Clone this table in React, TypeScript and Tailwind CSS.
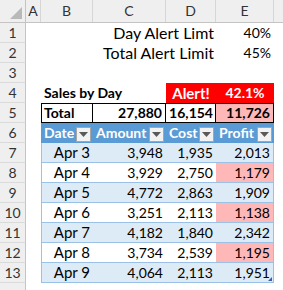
import type { ReactNode } from "react";

const rows = [
  { date: "Apr 3", amount: "3,948", cost: "1,935", profit: "2,013", alert: false },
  { date: "Apr 4", amount: "3,929", cost: "2,750", profit: "1,179", alert: true },
  { date: "Apr 5", amount: "4,772", cost: "2,863", profit: "1,909", alert: false },
  { date: "Apr 6", amount: "3,251", cost: "2,113", profit: "1,138", alert: true },
  { date: "Apr 7", amount: "4,182", cost: "1,840", profit: "2,342", alert: false },
  { date: "Apr 8", amount: "3,734", cost: "2,539", profit: "1,195", alert: true },
  { date: "Apr 9", amount: "4,064", cost: "2,113", profit: "1,951", alert: false },
];

function RowHead({ n }: { n?: number }) {
  return (
    <div className="flex h-[20px] w-[26px] shrink-0 items-center justify-center border-r border-b border-r-[#c4c4c4] border-b-[#dadada] bg-[#efefef] text-[14px] text-[#333]">
      {n}
    </div>
  );
}

function FilterButton() {
  return (
    <div className="absolute right-[2px] bottom-[1px] flex h-[15px] w-[15px] items-center justify-center border border-[#a6a6a6] bg-[#f2f2f2]">
      <svg width="9" height="5" viewBox="0 0 9 5">
        <polygon points="0,0 9,0 4.5,5" fill="#595959" />
      </svg>
    </div>
  );
}

function Cell({ w, className = "", children }: { w: string; className?: string; children?: ReactNode }) {
  return (
    <div className={`flex h-[20px] shrink-0 items-center whitespace-nowrap ${w} ${className}`}>{children}</div>
  );
}

function Line({ n, children }: { n?: number; children?: ReactNode }) {
  return (
    <div className="flex h-[20px]">
      <RowHead n={n} />
      <div className="w-[15px] shrink-0" />
      {children}
    </div>
  );
}

export default function App() {
  return (
    <div className="h-[290px] w-[283px] overflow-hidden bg-white text-[15px] leading-none text-black" style={{ fontFamily: "Lato, 'Noto Sans', sans-serif" }}>
      {/* column headers */}
      <div className="flex h-[23px] border-b border-[#c4c4c4] bg-[#efefef] text-[14px] text-[#333]">
        <div className="relative w-[26px] shrink-0 border-r border-[#c4c4c4]">
          <svg className="absolute right-[3px] bottom-[3px]" width="12" height="12" viewBox="0 0 12 12">
            <polygon points="12,0 12,12 0,12" fill="#b9b9b9" />
          </svg>
        </div>
        <div className="flex w-[15px] shrink-0 items-center justify-center border-r border-[#d6d6d6]">A</div>
        <div className="flex w-[52px] shrink-0 items-center justify-center border-r border-[#d6d6d6]">B</div>
        <div className="flex w-[73px] shrink-0 items-center justify-center border-r border-[#d6d6d6]">C</div>
        <div className="flex w-[50px] shrink-0 items-center justify-center border-r border-[#d6d6d6]">D</div>
        <div className="flex w-[58px] shrink-0 items-center justify-center border-r border-[#d6d6d6]">E</div>
        <div className="flex-1" />
      </div>

      <Line n={1}>
        <Cell w="w-[52px]" />
        <Cell w="w-[73px]" />
        <Cell w="w-[50px]" className="justify-end pr-[2px] text-[16px]">Day Alert Limt</Cell>
        <Cell w="w-[58px]" className="justify-end pr-[3px] text-[14px]">40%</Cell>
      </Line>
      <Line n={2}>
        <Cell w="w-[52px]" />
        <Cell w="w-[73px]" />
        <Cell w="w-[50px]" className="justify-end pr-[2px] text-[16px]">Total Alert Limit</Cell>
        <Cell w="w-[58px]" className="justify-end pr-[3px] text-[14px]">45%</Cell>
      </Line>
      <Line n={3} />
      <Line n={4}>
        <Cell w="w-[52px]" className="pl-[3px] text-[14px] font-bold">Sales by Day</Cell>
        <Cell w="w-[73px]" />
        <Cell w="w-[50px]" className="justify-center bg-[#ff0000] font-bold text-white">Alert!</Cell>
        <Cell w="w-[58px]" className="justify-center bg-[#ff0000] text-[14px] font-bold text-white">42.1%</Cell>
      </Line>
      <Line n={5}>
        <Cell w="w-[52px]" className="border border-black pl-[2px] text-[14px] font-bold">Total</Cell>
        <Cell w="w-[73px]" className="justify-end border-y border-r border-black pr-[3px] text-[14px] font-bold">27,880</Cell>
        <Cell w="w-[50px]" className="justify-end border-y border-r border-black pr-[2px] text-[14px] font-bold">16,154</Cell>
        <Cell w="w-[58px]" className="justify-end border-y border-r border-black bg-[#ffb8b8] pr-[3px] text-[14px] font-bold">11,726</Cell>
      </Line>
      <Line n={6}>
        {["Date", "Amount", "Cost", "Profit"].map((h, i) => (
          <Cell
            key={h}
            w={["w-[52px]", "w-[73px]", "w-[50px]", "w-[58px]"][i]}
            className="relative bg-[#5b9bd5] pl-[3px] text-[14px] font-bold text-white"
          >
            {h}
            <FilterButton />
          </Cell>
        ))}
      </Line>
      {rows.map((r, i) => {
        const band = i % 2 === 0 ? "bg-[#ddebf7]" : "bg-white";
        return (
          <Line key={r.date} n={7 + i}>
            <Cell w="w-[52px]" className={`justify-end border-b border-l border-[#9bc2e6] pr-[3px] ${band}`}>{r.date}</Cell>
            <Cell w="w-[73px]" className={`justify-end border-b border-[#9bc2e6] pr-[3px] text-[14px] ${band}`}>{r.amount}</Cell>
            <Cell w="w-[50px]" className={`justify-end border-b border-[#9bc2e6] pr-[3px] text-[14px] ${band}`}>{r.cost}</Cell>
            <Cell
              w="w-[58px]"
              className={`relative justify-end border-r border-b border-[#9bc2e6] pr-[3px] text-[14px] ${r.alert ? "bg-[#ffb8b8]" : band}`}
            >
              {r.profit}
              {i === rows.length - 1 && (
                <svg className="absolute right-[1px] bottom-[1px]" width="4" height="4" viewBox="0 0 4 4">
                  <polygon points="4,0 4,4 0,4" fill="#3a5fa8" />
                </svg>
              )}
            </Cell>
          </Line>
        );
      })}
      <Line />
    </div>
  );
}
